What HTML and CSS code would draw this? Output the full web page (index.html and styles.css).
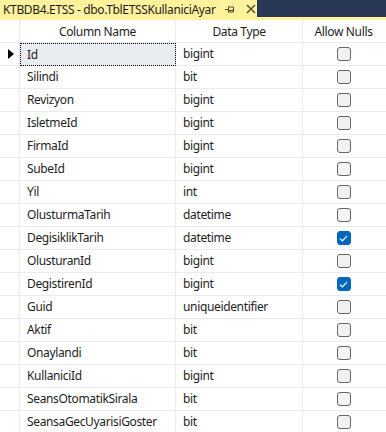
FILE: index.html
```html
<!DOCTYPE html>
<html>
<head>
<meta charset="utf-8">
<link rel="stylesheet" href="styles.css">
</head>
<body>
<div class="tabbar">
  <div class="tab">
    <span class="tab-title">KTBDB4.ETSS - dbo.TblETSSKullaniciAyar</span>
    <svg class="pin" width="10" height="10" viewBox="0 0 10 10"><path d="M0 5.5H3.5M3.5 2.5V8.5M3.5 3H8.5V8H3.5M3.5 6.5H8.5" fill="none" stroke="#4d4a2c" stroke-width="1"/></svg>
    <svg class="close" width="10" height="10" viewBox="0 0 10 10"><path d="M1 1L9 9M9 1L1 9" stroke="#5a5638" stroke-width="1.6"/></svg>
  </div>
  <div class="tab-fill"></div>
</div>
<div class="strip"></div>
<div class="grid">
  <div class="row head">
    <div class="c rh"></div>
    <div class="c name center">Column Name</div>
    <div class="c type center">Data Type</div>
    <div class="c nulls center">Allow Nulls</div>
  </div>
  <div class="row">
    <div class="c rh"><span class="arrow"></span></div>
    <div class="c name sel"><span>Id</span></div>
    <div class="c type">bigint</div>
    <div class="c nulls"><span class="cb"></span></div>
  </div>
  <div class="row"><div class="c rh"></div><div class="c name">Silindi</div><div class="c type">bit</div><div class="c nulls"><span class="cb"></span></div></div>
  <div class="row"><div class="c rh"></div><div class="c name">Revizyon</div><div class="c type">bigint</div><div class="c nulls"><span class="cb"></span></div></div>
  <div class="row"><div class="c rh"></div><div class="c name">IsletmeId</div><div class="c type">bigint</div><div class="c nulls"><span class="cb"></span></div></div>
  <div class="row"><div class="c rh"></div><div class="c name">FirmaId</div><div class="c type">bigint</div><div class="c nulls"><span class="cb"></span></div></div>
  <div class="row"><div class="c rh"></div><div class="c name">SubeId</div><div class="c type">bigint</div><div class="c nulls"><span class="cb"></span></div></div>
  <div class="row"><div class="c rh"></div><div class="c name">Yil</div><div class="c type">int</div><div class="c nulls"><span class="cb"></span></div></div>
  <div class="row"><div class="c rh"></div><div class="c name">OlusturmaTarih</div><div class="c type">datetime</div><div class="c nulls"><span class="cb"></span></div></div>
  <div class="row"><div class="c rh"></div><div class="c name">DegisiklikTarih</div><div class="c type">datetime</div><div class="c nulls"><span class="cb on"><svg width="9" height="7" viewBox="0 0 9 7"><path d="M1 3.6L3.3 5.8L8 1" fill="none" stroke="#fff" stroke-width="1.2"/></svg></span></div></div>
  <div class="row"><div class="c rh"></div><div class="c name">OlusturanId</div><div class="c type">bigint</div><div class="c nulls"><span class="cb"></span></div></div>
  <div class="row"><div class="c rh"></div><div class="c name">DegistirenId</div><div class="c type">bigint</div><div class="c nulls"><span class="cb on"><svg width="9" height="7" viewBox="0 0 9 7"><path d="M1 3.6L3.3 5.8L8 1" fill="none" stroke="#fff" stroke-width="1.2"/></svg></span></div></div>
  <div class="row"><div class="c rh"></div><div class="c name">Guid</div><div class="c type">uniqueidentifier</div><div class="c nulls"><span class="cb"></span></div></div>
  <div class="row"><div class="c rh"></div><div class="c name">Aktif</div><div class="c type">bit</div><div class="c nulls"><span class="cb"></span></div></div>
  <div class="row"><div class="c rh"></div><div class="c name">Onaylandi</div><div class="c type">bit</div><div class="c nulls"><span class="cb"></span></div></div>
  <div class="row"><div class="c rh"></div><div class="c name">KullaniciId</div><div class="c type">bigint</div><div class="c nulls"><span class="cb"></span></div></div>
  <div class="row"><div class="c rh"></div><div class="c name">SeansOtomatikSirala</div><div class="c type">bit</div><div class="c nulls"><span class="cb"></span></div></div>
  <div class="row"><div class="c rh"></div><div class="c name">SeansaGecUyarisiGoster</div><div class="c type">bit</div><div class="c nulls"><span class="cb"></span></div></div>
</div>
</body>
</html>
```
FILE: styles.css
```css
* { box-sizing: border-box; }
html, body { margin: 0; padding: 0; background: #fff; overflow: hidden; }
body {
  width: 386px; height: 432px;
  font-family: "Noto Sans", "Open Sans", sans-serif;
  font-size: 12px;
  letter-spacing: -0.35px;
  color: #1e1e1e;
}
.tabbar { display: flex; height: 17px; background: #293955; }
.tab {
  width: 257px; height: 17px; background: #fff29d;
  display: flex; align-items: center;
  padding-left: 3px;
}
.tab-title { font-size: 12px; line-height: 17px; color: #1e1e1e; white-space: nowrap; padding-top: 2px; }
.pin { margin-left: 9px; margin-top: 1px; }
.close { margin-left: 11px; margin-top: 1px; }
.tab-fill { flex: 1; }
.strip { height: 3px; background: #fff29d; }
.grid { display: flex; flex-direction: column; }
.row {
  display: grid;
  grid-template-columns: 20px 156px 127px 83px;
  height: 23px;
  border-bottom: 1px solid #ececec;
}
.c {
  display: flex; align-items: center;
  border-right: 1px solid #ececec;
  white-space: nowrap;
  line-height: 22px;
}
.c:last-child { border-right: none; }
.name { padding-left: 7px; }
.type { padding-left: 7px; }
.center { justify-content: center; padding-left: 0; padding-top: 1px; }
.nulls { justify-content: center; padding-right: 2px; }
.head .c { color: #1e1e1e; }
.rh { justify-content: center; }
.arrow {
  width: 0; height: 0;
  border-left: 6px solid #000;
  border-top: 5px solid transparent;
  border-bottom: 5px solid transparent;
  margin-left: 2px;
}
.sel {
  background: #e8ecf0;
  border: 1px dotted #000;
  padding-left: 6px;
  height: 23px;
  margin-bottom: -1px;
  position: relative;
}
.cb {
  width: 14px; height: 14px;
  border: 1px solid #666;
  border-radius: 3px;
  background: #f2f2f2;
  display: flex; align-items: center; justify-content: center;
}
.cb.on { background: #0067c0; border-color: #0067c0; }
```
